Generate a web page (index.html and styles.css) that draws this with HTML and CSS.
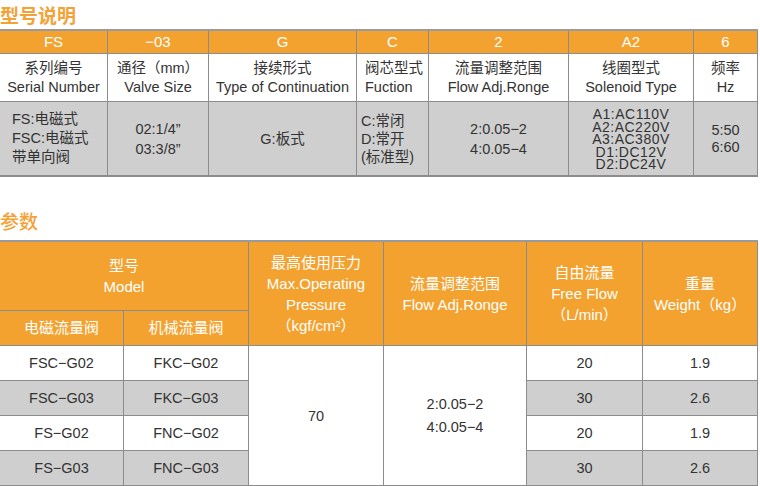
FILE: index.html
```html
<!DOCTYPE html>
<html lang="zh">
<head>
<meta charset="utf-8">
<title>型号说明</title>
<link rel="stylesheet" href="styles.css">
</head>
<body>
<h2 class="title title-first">型号说明</h2>
<table class="spec code">
  <colgroup>
    <col style="width:108px"><col style="width:101px"><col style="width:148px"><col style="width:72px"><col style="width:140px"><col style="width:125px"><col style="width:64px">
  </colgroup>
  <tr class="head">
    <td>FS</td><td>−03</td><td>G</td><td>C</td><td>2</td><td>A2</td><td>6</td>
  </tr>
  <tr class="label">
    <td>系列编号<br>Serial Number</td>
    <td>通径（mm）<br>Valve Size</td>
    <td>接续形式<br>Type of Continuation</td>
    <td class="left">阀芯型式<br>Fuction</td>
    <td>流量调整范围<br>Flow Adj.Ronge</td>
    <td>线圈型式<br>Solenoid Type</td>
    <td>频率<br>Hz</td>
  </tr>
  <tr class="opts">
    <td class="left pad lh19">FS:电磁式<br>FSC:电磁式<br>带单向阀</td>
    <td class="lh20">02:1/4”<br>03:3/8”</td>
    <td>G:板式</td>
    <td class="left pad-s lh18">C:常闭<br>D:常开<br>(标准型)</td>
    <td class="lh20">2:0.05−2<br>4:0.05−4</td>
    <td class="tight">A1:AC110V<br>A2:AC220V<br>A3:AC380V<br>D1:DC12V<br>D2:DC24V</td>
    <td class="lh17">5:50<br>6:60</td>
  </tr>
</table>

<h2 class="title title-second">参数</h2>
<table class="spec params">
  <colgroup>
    <col style="width:124px"><col style="width:125px"><col style="width:135px"><col style="width:143px"><col style="width:116px"><col style="width:115px">
  </colgroup>
  <tr class="head h-top">
    <td colspan="2">型号<br>Model</td>
    <td rowspan="2" class="lh21">最高使用压力<br>Max.Operating<br>Pressure<br>（kgf/cm²）</td>
    <td rowspan="2">流量调整范围<br>Flow Adj.Ronge</td>
    <td rowspan="2" class="lh21">自由流量<br>Free Flow<br>（L/min）</td>
    <td rowspan="2">重量<br>Weight（kg）</td>
  </tr>
  <tr class="head h-sub">
    <td>电磁流量阀</td><td>机械流量阀</td>
  </tr>
  <tr class="row white">
    <td>FSC−G02</td><td>FKC−G02</td>
    <td rowspan="4" class="merged">70</td>
    <td rowspan="4" class="merged lh23">2:0.05−2<br>4:0.05−4</td>
    <td>20</td><td>1.9</td>
  </tr>
  <tr class="row gray">
    <td>FSC−G03</td><td>FKC−G03</td><td>30</td><td>2.6</td>
  </tr>
  <tr class="row white">
    <td>FS−G02</td><td>FNC−G02</td><td>20</td><td>1.9</td>
  </tr>
  <tr class="row gray">
    <td>FS−G03</td><td>FNC−G03</td><td>30</td><td>2.6</td>
  </tr>
</table>
</body>
</html>
```
FILE: styles.css
```css
html, body {
  margin: 0;
  padding: 0;
  background: #ffffff;
}

body {
  width: 760px;
  font-family: "Liberation Sans", Arial, "Noto Sans CJK SC", sans-serif;
  color: #333333;
}

.title {
  margin: 0;
  font-family: "Noto Sans CJK SC", "Liberation Sans", sans-serif;
  font-size: 19px;
  line-height: 24px;
  color: #f4a236;
}

.title-first {
  padding-top: 3px;
  height: 26px;
  font-weight: 700;
}

.title-second {
  margin-top: 32px;
  height: 31px;
  font-weight: 500;
}

.spec {
  border-collapse: collapse;
  table-layout: fixed;
  margin-left: -1px;
  width: 759px;
}

.spec td {
  border: 1px solid #8c8c8c;
  text-align: center;
  vertical-align: middle;
  padding: 0;
  font-size: 14px;
  line-height: 20px;
}

.spec tr:first-child td {
  border-top: 2px solid #9a9a9a;
}

.spec tr:last-child td,
.spec td.merged {
  border-bottom: 2px solid #8c8c8c;
}

.head td {
  background: #f4a22f;
  color: #ffffff;
  font-size: 15px;
}

.code .head td {
  height: 22px;
  line-height: 22px;
}

.code .label td {
  height: 47px;
  background: #ffffff;
  font-size: 14.5px;
  line-height: 19px;
}

.code .opts td {
  height: 71px;
  background: #cfcfcf;
  font-size: 14.5px;
}

.left {
  text-align: left !important;
}

.pad { padding-left: 12px !important; }
.pad-s { padding-left: 4px !important; }

.lh17 { line-height: 17px !important; }
.lh18 { line-height: 18px !important; }
.lh19 { line-height: 19px !important; }
.lh20 { line-height: 20px !important; }
.lh21 { line-height: 21px !important; }
.lh23 { line-height: 23px !important; }

.code .opts td.tight {
  line-height: 12.6px;
  font-size: 14px;
  letter-spacing: 0.5px;
  padding-top: 2px;
}

.code .label td.left {
  padding-left: 8px;
}

.params .h-top td {
  height: 68px;
  line-height: 21px;
}

.params .h-sub td {
  height: 34px;
}

.params .row td {
  height: 34px;
  font-size: 14.5px;
}

.params .white td {
  background: #ffffff;
}

.params .gray td {
  background: #cfcfcf;
}

.params td.merged {
  background: #ffffff !important;
}
```
